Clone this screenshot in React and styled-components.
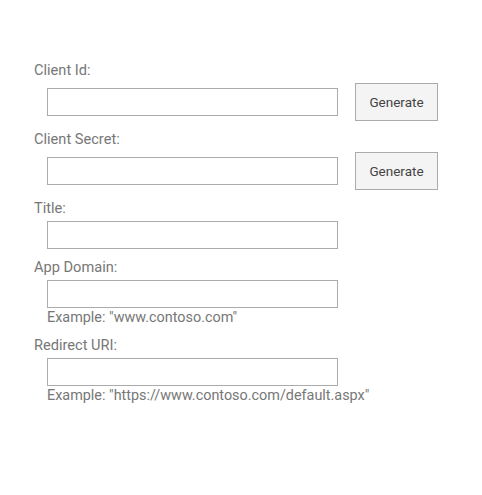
import React from 'react';
import styled, { createGlobalStyle } from 'styled-components';

const GlobalStyle = createGlobalStyle`
body {
  margin: 0;
  background: #fff;
  font-family: "Segoe UI", Roboto, "Liberation Sans", sans-serif;
}
`;

const Form = styled.div`
  padding: 60px 0 0 34px;
  display: flex;
  flex-direction: column;
  gap: 8px;
`;

const Field = styled.div`
  display: flex;
  flex-direction: column;
`;

const Label = styled.label`
  display: block;
  font-size: 14.6px;
  line-height: 20px;
  color: #777;
`;

const Row = styled.div`
  display: flex;
  align-items: center;
  gap: 17px;
  margin-top: 3px;
  padding-left: 13px;
`;

const TextInput = styled.input`
  box-sizing: border-box;
  width: 291px;
  height: 28px;
  margin: 0;
  padding: 2px 6px;
  border: 1px solid #ababab;
  background: #fff;
  font: inherit;
  font-size: 14px;
  color: #444;
  outline: none;
`;

const Button = styled.button`
  box-sizing: border-box;
  width: 83px;
  height: 38px;
  margin: 0;
  padding: 0;
  border: 1px solid #ababab;
  background: #f4f4f4;
  font-family: inherit;
  font-size: 13.5px;
  color: #444;
  cursor: pointer;
`;

const Hint = styled.div`
  margin-top: 1px;
  padding-left: 13px;
  font-size: 14.4px;
  line-height: 18px;
  color: #777;
`;

const fields = [
  { label: 'Client Id:', button: true },
  { label: 'Client Secret:', button: true },
  { label: 'Title:' },
  { label: 'App Domain:', hint: 'Example: "www.contoso.com"' },
  { label: 'Redirect URI:', hint: 'Example: "https://www.contoso.com/default.aspx"' },
];

const App = () => {
  return (
    <>
      <GlobalStyle />
      <Form>
        {fields.map((f) => (
          <Field key={f.label}>
            <Label>{f.label}</Label>
            <Row>
              <TextInput type="text" />
              {f.button && <Button type="button">Generate</Button>}
            </Row>
            {f.hint && <Hint>{f.hint}</Hint>}
          </Field>
        ))}
      </Form>
    </>
  );
};

export default App;
